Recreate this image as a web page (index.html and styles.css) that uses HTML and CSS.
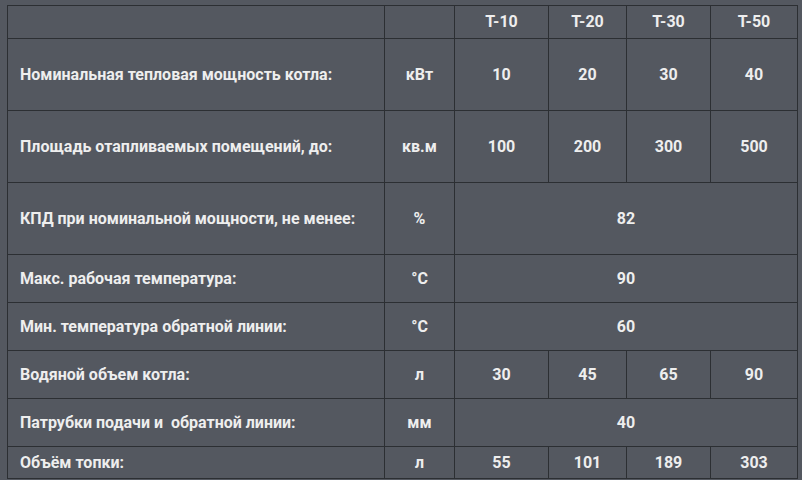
FILE: index.html
```html
<!DOCTYPE html>
<html lang="ru">
<head>
<meta charset="utf-8">
<title>Технические характеристики</title>
<link rel="stylesheet" href="styles.css">
</head>
<body>
<table class="specs">
  <colgroup>
    <col class="c-name">
    <col class="c-unit">
    <col class="c-m1">
    <col class="c-m2">
    <col class="c-m3">
    <col class="c-m4">
  </colgroup>
  <tr class="r-head">
    <td></td><td></td><td>Т-10</td><td>Т-20</td><td>Т-30</td><td>Т-50</td>
  </tr>
  <tr class="r-tall">
    <td class="name">Номинальная тепловая мощность котла:</td><td>кВт</td><td>10</td><td>20</td><td>30</td><td>40</td>
  </tr>
  <tr class="r-tall">
    <td class="name">Площадь отапливаемых помещений, до:</td><td>кв.м</td><td>100</td><td>200</td><td>300</td><td>500</td>
  </tr>
  <tr class="r-tall">
    <td class="name">КПД при номинальной мощности, не менее:</td><td>%</td><td colspan="4">82</td>
  </tr>
  <tr class="r-mid">
    <td class="name">Макс. рабочая температура:</td><td>°C</td><td colspan="4">90</td>
  </tr>
  <tr class="r-mid">
    <td class="name">Мин. температура обратной линии:</td><td>°C</td><td colspan="4">60</td>
  </tr>
  <tr class="r-mid">
    <td class="name">Водяной объем котла:</td><td>л</td><td>30</td><td>45</td><td>65</td><td>90</td>
  </tr>
  <tr class="r-mid">
    <td class="name">Патрубки подачи и &nbsp;обратной линии:</td><td>мм</td><td colspan="4">40</td>
  </tr>
  <tr class="r-last">
    <td class="name">Объём топки:</td><td>л</td><td>55</td><td>101</td><td>189</td><td>303</td>
  </tr>
</table>
</body>
</html>
```

FILE: styles.css
```css
html, body {
  margin: 0;
  padding: 0;
  background: #545860;
}
body {
  padding: 5px 0 0 7px;
  font-family: Roboto, "Noto Sans", sans-serif;
}
.specs {
  border-collapse: collapse;
  table-layout: fixed;
  width: 790px;
  color: #eeeeee;
  font-size: 16px;
  font-weight: 700;
}
.specs td {
  border: 1px solid #2c2f33;
  padding: 0;
  text-align: center;
  vertical-align: middle;
  line-height: 18px;
}
.specs td.name {
  text-align: left;
  padding-left: 12px;
}
.c-name { width: 377px; }
.c-unit { width: 70px; }
.c-m1 { width: 94px; }
.c-m2 { width: 78px; }
.c-m3 { width: 84px; }
.c-m4 { width: 87px; }
.r-head { height: 33px; }
.r-tall { height: 72px; }
.r-mid { height: 48px; }
.r-last { height: 32px; }
```
